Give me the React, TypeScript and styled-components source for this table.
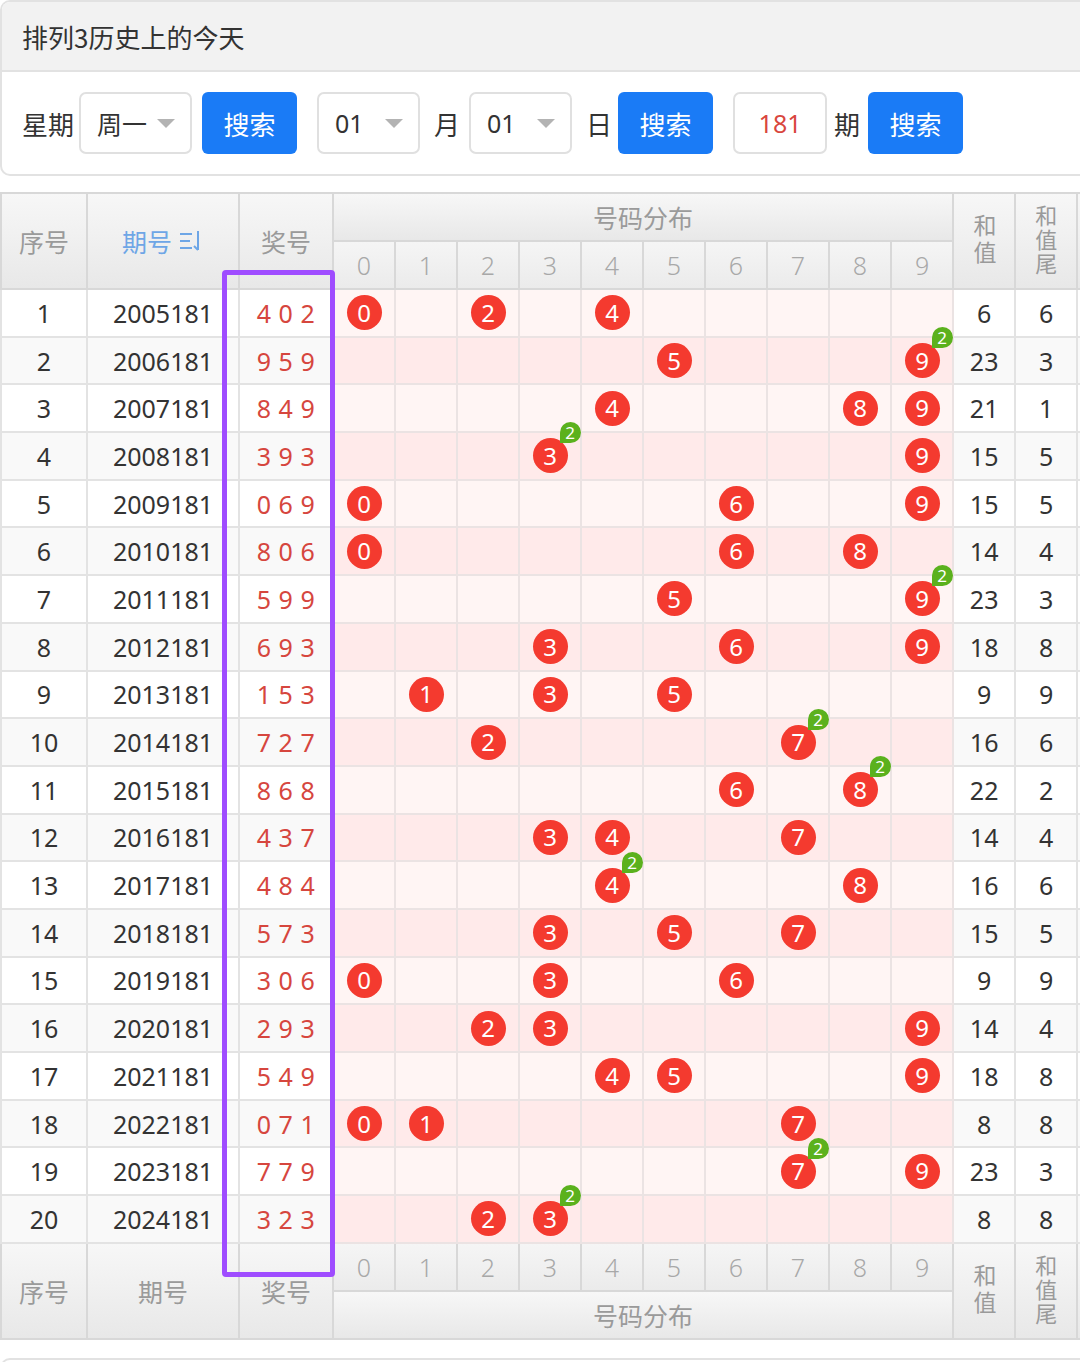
import React from 'react';
import styled, { createGlobalStyle } from 'styled-components';

const GlobalStyle = createGlobalStyle`
  html, body { margin: 0; padding: 0; background: #fff; }
  body {
    font-family: "Noto Sans", "Noto Sans CJK SC", sans-serif;
    color: #333;
    overflow: hidden;
  }
  * { box-sizing: border-box; }
`;

const Page = styled.div`
  width: 1080px;
  overflow: hidden;
`;

const Panel = styled.section`
  border: 2px solid #e2e2e2;
  border-right: none;
  border-radius: 10px 0 0 10px;
  overflow: hidden;
  background: #fff;
`;

const PanelHead = styled.div`
  height: 70px;
  background: #f2f2f2;
  border-bottom: 2px solid #e2e2e2;
  display: flex;
  align-items: center;
  padding-left: 20px;
  font-family: "Noto Sans CJK SC", sans-serif;
  font-size: 26px;
  color: #333;
`;

const SearchRow = styled.div`
  height: 102px;
  display: flex;
  align-items: center;
  padding-left: 20px;
`;

const Label = styled.span<{ $ml?: number }>`
  margin-left: ${(p) => p.$ml ?? 0}px;
  font-family: "Noto Sans CJK SC", sans-serif;
  font-size: 26px;
  color: #333;
  white-space: nowrap;
`;

const SelectBox = styled.div<{ $w: number; $ml: number }>`
  width: ${(p) => p.$w}px;
  margin-left: ${(p) => p.$ml}px;
  height: 62px;
  border: 2px solid #e0e0e0;
  border-radius: 7px;
  display: flex;
  align-items: center;
  justify-content: space-between;
  padding: 0 15px 0 16px;
  font-family: "Noto Sans", "Noto Sans CJK SC", sans-serif;
  font-size: 25px;
  color: #333;
  background: #fff;
`;

const SelectText = styled.span<{ $cjk?: boolean }>`
  font-family: ${(p) => (p.$cjk ? '"Noto Sans CJK SC", sans-serif' : '"Noto Sans", sans-serif')};
`;

const Caret = styled.span`
  width: 0;
  height: 0;
  border-left: 9px solid transparent;
  border-right: 9px solid transparent;
  border-top: 9px solid #b3b3b3;
`;

const Button = styled.button<{ $ml: number }>`
  margin-left: ${(p) => p.$ml}px;
  width: 95px;
  height: 62px;
  border: none;
  border-radius: 6px;
  background: #1a7bf6;
  color: #fff;
  font-family: "Noto Sans CJK SC", sans-serif;
  font-size: 26px;
  padding: 0;
`;

const NumInput = styled.div<{ $ml: number }>`
  margin-left: ${(p) => p.$ml}px;
  width: 94px;
  height: 62px;
  border: 2px solid #e0e0e0;
  border-radius: 7px;
  display: flex;
  align-items: center;
  justify-content: center;
  font-size: 25px;
  color: #d9463e;
`;

const TableWrap = styled.div`
  position: relative;
  margin-top: 16px;
`;

const Table = styled.table`
  border-collapse: collapse;
  table-layout: fixed;
  width: 1116px;
`;

const Th = styled.th<{ $blue?: boolean }>`
  height: 48px;
  padding: 0;
  border: 2px solid #d8d8d8;
  background: linear-gradient(#f7f7f7, #e8e8e8);
  color: ${(p) => (p.$blue ? '#6ea6e6' : '#9a9a9a')};
  font-weight: normal;
  font-family: "Noto Sans CJK SC", sans-serif;
  font-size: 25px;
  text-align: center;
  vertical-align: middle;
`;

const DigitTh = styled.th`
  height: 48px;
  padding: 0;
  border: 2px solid #d8d8d8;
  background: linear-gradient(#f5f5f5, #ebebeb);
  color: #a8a8a8;
  font-weight: 300;
  font-family: "Noto Sans", sans-serif;
  font-size: 25px;
  text-align: center;
`;

const VerticalText = styled.span<{ $size: number; $space: number }>`
  display: inline-block;
  writing-mode: vertical-rl;
  text-orientation: upright;
  font-size: ${(p) => p.$size}px;
  letter-spacing: ${(p) => p.$space}px;
  line-height: 1.2;
  vertical-align: middle;
`;

const HeadInner = styled.span`
  display: inline-flex;
  align-items: center;
  gap: 6px;
`;

const Row = styled.tr`
  height: 47.7px;
`;

const Td = styled.td<{ $odd: boolean }>`
  padding: 0;
  border: 2px solid #e3e3e3;
  background: ${(p) => (p.$odd ? '#ffffff' : '#f9f9f9')};
  text-align: center;
  vertical-align: middle;
  font-size: 25px;
  color: #333;
`;

const DrawTd = styled(Td)`
  color: #d6463e;
  letter-spacing: 0.5px;
`;

const DistTd = styled.td<{ $odd: boolean }>`
  padding: 0;
  border: 2px solid #ebe3e3;
  background: ${(p) => (p.$odd ? '#fff5f4' : '#ffeaea')};
  text-align: center;
  vertical-align: middle;
`;

const Ball = styled.span`
  position: relative;
  display: inline-flex;
  align-items: center;
  justify-content: center;
  width: 35px;
  height: 35px;
  border-radius: 50%;
  background: #f43a2f;
  color: #fff;
  font-size: 24px;
  line-height: 1;
  vertical-align: middle;
`;

const Badge = styled.span`
  position: absolute;
  left: 27px;
  top: -16px;
  width: 21px;
  height: 21px;
  border-radius: 50% 50% 50% 0;
  background: #5bb11d;
  color: #fff;
  font-size: 17px;
  line-height: 21px;
  text-align: center;
  z-index: 2;
`;

const Highlight = styled.div`
  position: absolute;
  left: 222px;
  top: 78px;
  width: 113px;
  height: 1007px;
  border: 5px solid #9f4cff;
  border-radius: 4px;
  pointer-events: none;
  z-index: 5;
`;

const BottomPanel = styled(Panel)`
  margin-top: 18px;
  height: 80px;
`;

const SortIcon = () => (
  <svg width="26" height="24" viewBox="0 0 26 24" fill="none" stroke="#6ea6e6" strokeWidth="2">
    <line x1="2" y1="5" x2="14" y2="5" />
    <line x1="2" y1="12" x2="12" y2="12" />
    <line x1="2" y1="19" x2="14" y2="19" />
    <line x1="20" y1="2" x2="20" y2="21" />
    <line x1="20" y1="21" x2="16" y2="17" />
  </svg>
);

const draws = [
  '402', '959', '849', '393', '069', '806', '599', '693', '153', '727',
  '868', '437', '484', '573', '306', '293', '549', '071', '779', '323',
];

const digits = [0, 1, 2, 3, 4, 5, 6, 7, 8, 9];

const SumHead = () => (
  <VerticalText $size={23} $space={4}>
    和值
  </VerticalText>
);
const TailHead = () => (
  <VerticalText $size={22} $space={2}>
    和值尾
  </VerticalText>
);

export default function App() {
  return (
    <Page>
      <GlobalStyle />
      <Panel>
        <PanelHead>排列3历史上的今天</PanelHead>
        <SearchRow>
          <Label>星期</Label>
          <SelectBox $w={113} $ml={5}>
            <SelectText $cjk>周一</SelectText>
            <Caret />
          </SelectBox>
          <Button $ml={10}>搜索</Button>
          <SelectBox $w={103} $ml={20}>
            <SelectText>01</SelectText>
            <Caret />
          </SelectBox>
          <Label $ml={14}>月</Label>
          <SelectBox $w={103} $ml={9}>
            <SelectText>01</SelectText>
            <Caret />
          </SelectBox>
          <Label $ml={14}>日</Label>
          <Button $ml={6}>搜索</Button>
          <NumInput $ml={20}>181</NumInput>
          <Label $ml={7}>期</Label>
          <Button $ml={8}>搜索</Button>
        </SearchRow>
      </Panel>

      <TableWrap>
        <Table>
          <colgroup>
            <col style={{ width: 86 }} />
            <col style={{ width: 152 }} />
            <col style={{ width: 94 }} />
            {digits.map((d) => (
              <col key={d} style={{ width: 62 }} />
            ))}
            <col style={{ width: 62 }} />
            <col style={{ width: 62 }} />
            <col style={{ width: 40 }} />
          </colgroup>
          <thead>
            <tr>
              <Th rowSpan={2}>序号</Th>
              <Th rowSpan={2} $blue>
                <HeadInner>
                  期号
                  <SortIcon />
                </HeadInner>
              </Th>
              <Th rowSpan={2}>奖号</Th>
              <Th colSpan={10}>号码分布</Th>
              <Th rowSpan={2}>
                <SumHead />
              </Th>
              <Th rowSpan={2}>
                <TailHead />
              </Th>
              <Th rowSpan={2} />
            </tr>
            <tr>
              {digits.map((d) => (
                <DigitTh key={d}>{d}</DigitTh>
              ))}
            </tr>
          </thead>
          <tbody>
            {draws.map((draw, i) => {
              const nums = draw.split('').map(Number);
              const sum = nums.reduce((a, b) => a + b, 0);
              const odd = i % 2 === 0;
              return (
                <Row key={i}>
                  <Td $odd={odd}>{i + 1}</Td>
                  <Td $odd={odd}>{2005 + i}181</Td>
                  <DrawTd $odd={odd}>{nums.join(' ')}</DrawTd>
                  {digits.map((d) => {
                    const count = nums.filter((n) => n === d).length;
                    return (
                      <DistTd key={d} $odd={odd}>
                        {count > 0 && (
                          <Ball>
                            {d}
                            {count > 1 && <Badge>{count}</Badge>}
                          </Ball>
                        )}
                      </DistTd>
                    );
                  })}
                  <Td $odd={odd}>{sum}</Td>
                  <Td $odd={odd}>{sum % 10}</Td>
                  <Td $odd={odd} />
                </Row>
              );
            })}
          </tbody>
          <tfoot>
            <tr>
              <Th rowSpan={2}>序号</Th>
              <Th rowSpan={2}>期号</Th>
              <Th rowSpan={2}>奖号</Th>
              {digits.map((d) => (
                <DigitTh key={d}>{d}</DigitTh>
              ))}
              <Th rowSpan={2}>
                <SumHead />
              </Th>
              <Th rowSpan={2}>
                <TailHead />
              </Th>
              <Th rowSpan={2} />
            </tr>
            <tr>
              <Th colSpan={10}>号码分布</Th>
            </tr>
          </tfoot>
        </Table>
        <Highlight />
      </TableWrap>

      <BottomPanel />
    </Page>
  );
}
